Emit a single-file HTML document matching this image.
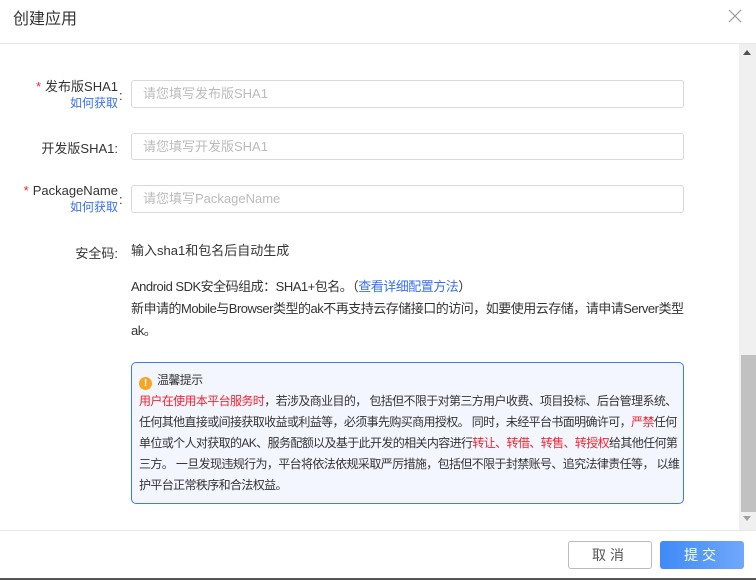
<!DOCTYPE html>
<html><head><meta charset="utf-8"><style>
*{box-sizing:border-box;margin:0;padding:0}
body{width:756px;height:580px;overflow:hidden;background:#fff;font-family:"Liberation Sans","Noto Sans CJK SC",sans-serif;font-size:13px;color:#333;position:relative}
.hdr{position:absolute;left:0;top:0;width:756px;height:44px;border-bottom:1px solid #e8e8e8}
.hdr .t{position:absolute;left:13px;top:5px;font-size:16px;color:#333}
.x{position:absolute;left:728px;top:9px}
.sb{position:absolute;left:739px;top:44px;width:17px;height:486px;background:#f0f0f0}
.thumb{position:absolute;left:2px;top:311px;width:15px;height:157px;background:#c1c1c1}
.lbl{position:absolute;right:638px;text-align:right;white-space:nowrap}
.req{color:#f5222d;margin-right:4px}
.link{color:#3a6ff0;font-size:12px}
.colon{position:absolute;left:119px}
.inp{position:absolute;left:131px;width:553px;border:1px solid #d9d9d9;border-radius:3px;color:#bbb;padding-left:11px;font-size:13px}
.txt{position:absolute;left:131px;line-height:22px;white-space:nowrap}
.box{position:absolute;left:131px;top:362px;width:553px;height:142px;border:1px solid #3a7cf5;border-radius:5px;background:#f3f6ff;padding:7px 7px;font-size:12px;line-height:21px;color:#333;white-space:nowrap;letter-spacing:-0.62px}
.red{color:#f5222d}
.ico{display:inline-block;width:13px;height:13px;border-radius:50%;background:#f5a623;color:#fff;font-size:10px;line-height:13px;text-align:center;vertical-align:-2px;margin-right:5px;font-weight:bold;letter-spacing:0}
.ftr{position:absolute;left:0;top:530px;width:756px;height:50px;border-top:1px solid #e8e8e8}
.btn{position:absolute;top:541px;width:84px;height:28px;border-radius:3px;text-align:center;line-height:26px;font-size:14px;letter-spacing:4px}
.bl{position:absolute;left:0;top:578px;width:756px;height:2px;background:#555}
</style></head><body>
<div class="hdr"><div class="t">创建应用</div><svg class="x" width="14" height="14" viewBox="0 0 14 14"><path d="M1 1L13 13M13 1L1 13" stroke="#999" stroke-width="1.2"/></svg></div>
<div class="sb"><div style="position:absolute;left:4px;top:6px;border:4px solid transparent;border-bottom:5px solid #505050;border-top:0"></div><div class="thumb"></div><div style="position:absolute;left:4px;top:472px;border:4px solid transparent;border-top:5px solid #a0a0a0;border-bottom:0"></div></div>

<div class="lbl" style="top:79px;line-height:16px"><span class="req">*</span>发布版SHA1<br><span class="link">如何获取</span></div>
<div class="colon" style="top:88px">:</div>
<div class="inp" style="top:80px;height:28px;line-height:26px">请您填写发布版SHA1</div>

<div class="lbl" style="top:138px">开发版SHA1:</div>
<div class="inp" style="top:133px;height:27px;line-height:25px">请您填写开发版SHA1</div>

<div class="lbl" style="top:183px;line-height:16px"><span class="req">*</span>PackageName<br><span class="link">如何获取</span></div>
<div class="colon" style="top:192px">:</div>
<div class="inp" style="top:185px;height:28px;line-height:26px">请您填写PackageName</div>

<div class="lbl" style="top:243px">安全码:</div>
<div class="txt" style="top:240px">输入sha1和包名后自动生成</div>
<div class="txt" style="top:276px;letter-spacing:-0.5px">Android SDK安全码组成：SHA1+包名。（<span style="color:#3a6ff0">查看详细配置方法</span>）<br>新申请的Mobile与Browser类型的ak不再支持云存储接口的访问，如要使用云存储，请申请Server类型<br>ak。</div>

<div class="box"><span class="ico">!</span>温馨提示<br><span class="red">用户在使用本平台服务时</span>，若涉及商业目的， 包括但不限于对第三方用户收费、项目投标、后台管理系统、<br>任何其他直接或间接获取收益或利益等，必须事先购买商用授权。 同时，未经平台书面明确许可，<span class="red">严禁</span>任何<br>单位或个人对获取的AK、服务配额以及基于此开发的相关内容进行<span class="red">转让、转借、转售、转授权</span>给其他任何第<br>三方。 一旦发现违规行为，平台将依法依规采取严厉措施，包括但不限于封禁账号、追究法律责任等， 以维<br>护平台正常秩序和合法权益。</div>

<div class="ftr"></div>
<div class="btn" style="left:568px;border:1px solid #bbb;color:#555;background:#fff">取消</div>
<div class="btn" style="left:660px;background:linear-gradient(90deg,#3f8af7,#6fa8fa);color:#fff;line-height:28px">提交</div>
<div class="bl"></div>
</body></html>
